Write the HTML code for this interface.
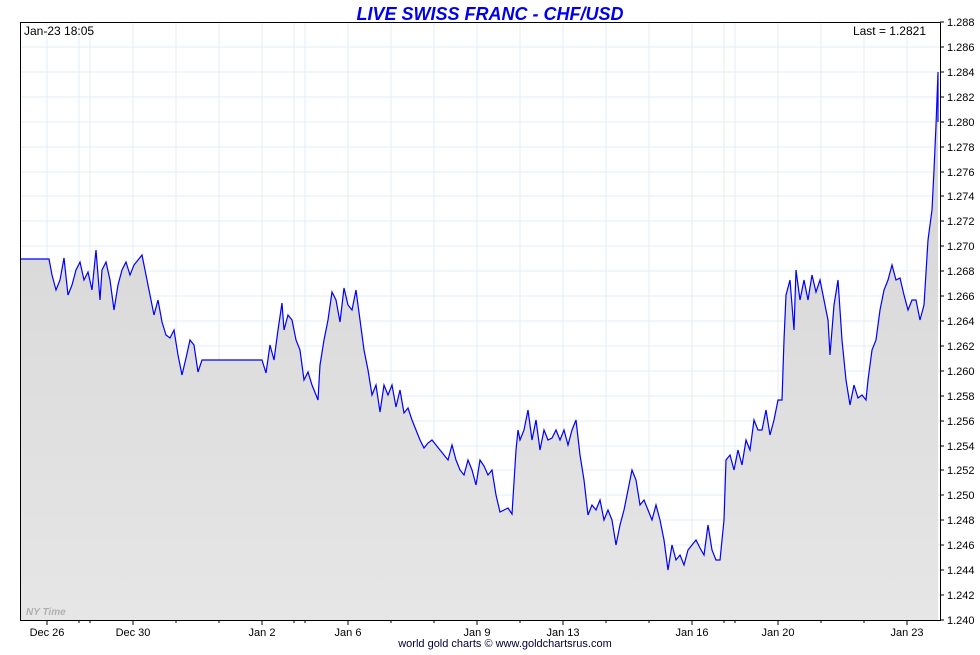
<!DOCTYPE html>
<html><head><meta charset="utf-8"><style>
body{margin:0;background:#fff;width:980px;height:650px;overflow:hidden;font-family:"Liberation Sans",sans-serif}
</style></head><body>
<svg width="980" height="650" xmlns="http://www.w3.org/2000/svg" font-family="Liberation Sans, sans-serif">
<defs><linearGradient id="g" x1="0" y1="0" x2="0" y2="1"><stop offset="0" stop-color="#d4d4d4"/><stop offset="1" stop-color="#e6e6e6"/></linearGradient></defs>
<text x="490" y="20" text-anchor="middle" font-size="18" font-weight="bold" font-style="italic" fill="#0000ee">LIVE SWISS FRANC - CHF/USD</text>
<g stroke="#e3eef6" stroke-width="1">
<path id="hg" d="M20,47H940M20,72H940M20,97H940M20,122H940M20,147H940M20,172H940M20,196H940M20,221H940M20,246H940M20,271H940M20,296H940M20,321H940M20,346H940M20,371H940M20,396H940M20,421H940M20,446H940M20,470H940M20,495H940M20,520H940M20,545H940M20,570H940M20,595H940"/>
<path d="M47,22V620M79,22V620M90,22V620M133,22V620M176,22V620M219,22V620M262,22V620M294,22V620M305,22V620M348,22V620M391,22V620M434,22V620M477,22V620M520,22V620M563,22V620M606,22V620M649,22V620M692,22V620M724,22V620M735,22V620M778,22V620M821,22V620M864,22V620M907,22V620"/>
</g>
<path fill="url(#g)" d="M20,259 49,259 52,275 56,290 60,280 64,258 68,295 72,285 76,270 80,262 84,280 88,272 92,290 96,250 100,300 102,270 106,262 110,280 114,310 118,285 122,270 126,262 130,275 134,265 138,260 142,255 146,275 150,295 154,315 158,300 162,322 166,335 170,338 174,330 178,355 182,375 186,358 190,340 194,345 198,372 202,360 206,360 262,360 266,373 270,345 274,360 278,330 282,303 284,330 288,315 292,320 296,340 300,350 304,380 308,372 312,385 316,395 318,400 320,365 324,340 328,320 332,292 336,300 340,322 344,288 348,305 352,310 356,290 360,320 364,350 368,370 372,395 376,385 380,412 384,385 388,395 392,385 396,407 400,390 404,413 408,408 412,420 416,430 420,440 424,448 428,443 432,440 436,445 440,450 444,455 448,460 452,445 456,460 460,470 464,475 468,460 472,470 476,485 480,460 484,466 488,475 492,470 496,495 500,512 504,510 508,508 512,514 516,450 518,430 520,440 524,430 528,410 532,440 536,420 540,450 544,430 548,440 552,438 556,430 560,440 564,430 568,445 572,430 576,420 580,455 584,480 588,515 592,505 596,510 600,500 604,520 608,510 612,520 616,545 620,525 624,510 628,490 632,470 636,480 640,505 644,500 648,510 652,520 656,505 660,520 664,540 668,570 672,545 676,560 680,555 684,565 688,550 692,545 696,540 700,548 704,555 708,525 712,550 716,560 720,560 724,520 726,460 730,455 734,470 738,450 742,465 746,440 750,450 754,420 758,430 762,430 766,410 770,435 774,420 778,400 782,400 784,340 786,295 790,280 794,330 796,270 800,300 804,280 808,300 812,275 816,292 820,280 824,300 828,320 830,355 834,305 838,280 842,340 846,380 850,405 854,385 858,398 862,395 866,400 868,380 872,350 876,340 880,310 884,290 888,280 892,265 896,280 900,278 904,295 908,310 912,300 916,300 920,320 924,305 928,240 932,210 934,170 936,125 938,72 938,122 938,620 20,620Z"/>
<polyline fill="none" stroke="#0000ff" stroke-width="1.2" points="20,259 49,259 52,275 56,290 60,280 64,258 68,295 72,285 76,270 80,262 84,280 88,272 92,290 96,250 100,300 102,270 106,262 110,280 114,310 118,285 122,270 126,262 130,275 134,265 138,260 142,255 146,275 150,295 154,315 158,300 162,322 166,335 170,338 174,330 178,355 182,375 186,358 190,340 194,345 198,372 202,360 206,360 262,360 266,373 270,345 274,360 278,330 282,303 284,330 288,315 292,320 296,340 300,350 304,380 308,372 312,385 316,395 318,400 320,365 324,340 328,320 332,292 336,300 340,322 344,288 348,305 352,310 356,290 360,320 364,350 368,370 372,395 376,385 380,412 384,385 388,395 392,385 396,407 400,390 404,413 408,408 412,420 416,430 420,440 424,448 428,443 432,440 436,445 440,450 444,455 448,460 452,445 456,460 460,470 464,475 468,460 472,470 476,485 480,460 484,466 488,475 492,470 496,495 500,512 504,510 508,508 512,514 516,450 518,430 520,440 524,430 528,410 532,440 536,420 540,450 544,430 548,440 552,438 556,430 560,440 564,430 568,445 572,430 576,420 580,455 584,480 588,515 592,505 596,510 600,500 604,520 608,510 612,520 616,545 620,525 624,510 628,490 632,470 636,480 640,505 644,500 648,510 652,520 656,505 660,520 664,540 668,570 672,545 676,560 680,555 684,565 688,550 692,545 696,540 700,548 704,555 708,525 712,550 716,560 720,560 724,520 726,460 730,455 734,470 738,450 742,465 746,440 750,450 754,420 758,430 762,430 766,410 770,435 774,420 778,400 782,400 784,340 786,295 790,280 794,330 796,270 800,300 804,280 808,300 812,275 816,292 820,280 824,300 828,320 830,355 834,305 838,280 842,340 846,380 850,405 854,385 858,398 862,395 866,400 868,380 872,350 876,340 880,310 884,290 888,280 892,265 896,280 900,278 904,295 908,310 912,300 916,300 920,320 924,305 928,240 932,210 934,170 936,125 938,72 938,122"/>
<rect x="20.5" y="22.5" width="920" height="598" fill="none" stroke="#000" stroke-width="1"/>
<text x="24" y="35" font-size="12" fill="#000">Jan-23  18:05</text>
<text x="926" y="35" font-size="12" fill="#000" text-anchor="end">Last = 1.2821</text>
<text x="26" y="615" font-size="10" font-weight="bold" font-style="italic" fill="#b0b0b0">NY Time</text>
<g stroke="#000"><path d="M940,22h4M940,47h4M940,72h4M940,97h4M940,122h4M940,147h4M940,172h4M940,196h4M940,221h4M940,246h4M940,271h4M940,296h4M940,321h4M940,346h4M940,371h4M940,396h4M940,421h4M940,446h4M940,470h4M940,495h4M940,520h4M940,545h4M940,570h4M940,595h4M940,620h4"/>
<path d="M47,620v5M79,620v3M90,620v3M133,620v5M176,620v3M219,620v3M262,620v5M294,620v3M305,620v3M348,620v5M391,620v3M434,620v3M477,620v5M520,620v3M563,620v5M606,620v3M649,620v3M692,620v5M724,620v3M735,620v3M778,620v5M821,620v3M864,620v3M907,620v5"/></g>
<g font-size="11" fill="#000">
<text x="947" y="26">1.288</text><text x="947" y="51">1.286</text><text x="947" y="76">1.284</text><text x="947" y="101">1.282</text><text x="947" y="126">1.280</text><text x="947" y="151">1.278</text><text x="947" y="176">1.276</text><text x="947" y="200">1.274</text><text x="947" y="225">1.272</text><text x="947" y="250">1.270</text><text x="947" y="275">1.268</text><text x="947" y="300">1.266</text><text x="947" y="325">1.264</text><text x="947" y="350">1.262</text><text x="947" y="375">1.260</text><text x="947" y="400">1.258</text><text x="947" y="425">1.256</text><text x="947" y="450">1.254</text><text x="947" y="474">1.252</text><text x="947" y="499">1.250</text><text x="947" y="524">1.248</text><text x="947" y="549">1.246</text><text x="947" y="574">1.244</text><text x="947" y="599">1.242</text><text x="947" y="624">1.240</text>
</g>
<g font-size="11" fill="#000" text-anchor="middle">
<text x="47" y="636">Dec 26</text><text x="133" y="636">Dec 30</text><text x="262" y="636">Jan 2</text><text x="348" y="636">Jan 6</text><text x="477" y="636">Jan 9</text><text x="563" y="636">Jan 13</text><text x="692" y="636">Jan 16</text><text x="778" y="636">Jan 20</text><text x="907" y="636">Jan 23</text>
</g>
<text x="505" y="647" font-size="11" fill="#000033" text-anchor="middle">world gold charts © www.goldchartsrus.com</text>
</svg>
</body></html>
